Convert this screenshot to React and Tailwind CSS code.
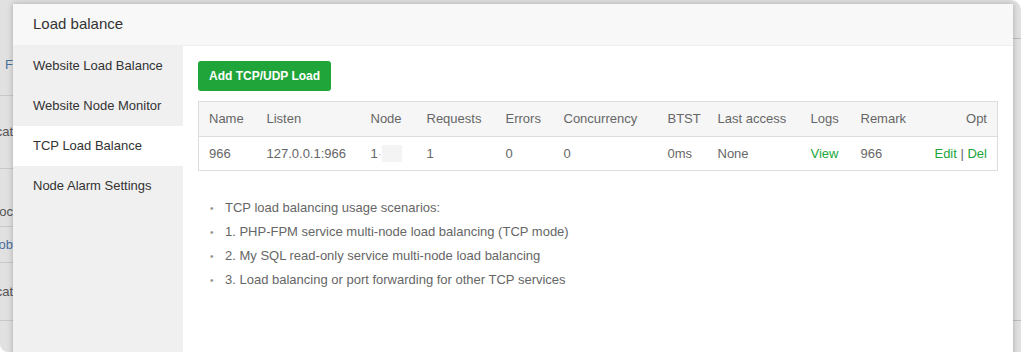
import React from 'react';

const navItems = [
  'Website Load Balance',
  'Website Node Monitor',
  'TCP Load Balance',
  'Node Alarm Settings',
];

const cols = [
  { title: 'Name', w: 'w-[58px]' },
  { title: 'Listen', w: 'w-[104px]' },
  { title: 'Node', w: 'w-[56px]' },
  { title: 'Requests', w: 'w-[79px]' },
  { title: 'Errors', w: 'w-[58px]' },
  { title: 'Concurrency', w: 'w-[104px]' },
  { title: 'BTST', w: 'w-[50px]' },
  { title: 'Last access', w: 'w-[93px]' },
  { title: 'Logs', w: 'w-[50px]' },
  { title: 'Remark', w: 'w-[70px]' },
  { title: 'Opt', w: '' },
];

const tips = [
  'TCP load balancing usage scenarios:',
  '1. PHP-FPM service multi-node load balancing (TCP mode)',
  '2. My SQL read-only service multi-node load balancing',
  '3. Load balancing or port forwarding for other TCP services',
];

function App() {
  return (
    <div className="w-[1021px] h-[352px] bg-white overflow-hidden font-['Liberation_Sans',Arial,sans-serif]">
      <div className="relative w-full h-full bg-[#e1e1e1] rounded-tr-[10px] rounded-bl-[8px] overflow-hidden">
        {/* page behind the layer */}
        <div className="w-[13px] h-full flex flex-col text-[13px] text-[#555]">
          <div className="h-[96px] border-b border-[#c9c9c9] flex items-center justify-end pt-[34px] whitespace-nowrap text-[#4a6f9c]">F</div>
          <div className="h-[73px] border-b border-[#c9c9c9] flex items-center justify-end whitespace-nowrap">cat</div>
          <div className="h-[58px] border-b border-[#c9c9c9] flex items-center justify-end whitespace-nowrap pt-[28px]">roc</div>
          <div className="h-[36px] border-b border-[#c9c9c9] flex items-center justify-end whitespace-nowrap text-[#4a6f9c]">lob</div>
          <div className="h-[58px] border-b border-[#c9c9c9] flex items-center justify-end whitespace-nowrap">cat</div>
        </div>
        <div className="absolute right-0 top-[38px] w-[8px] border-b border-[#bdbdbd]" />
        <div className="absolute right-0 top-[320px] w-[8px] border-b border-[#bdbdbd]" />

        {/* layer */}
        <div className="absolute left-[13px] top-[4px] w-[1000px] h-[360px] bg-white flex flex-col shadow-[0_0_6px_rgba(0,0,0,0.25)]">
          <div className="h-[42px] shrink-0 bg-[#f8f8f8] border-b border-[#eeeeee] flex items-center pl-[20px] text-[15px] text-[#333]">
            Load balance
          </div>
          <div className="flex flex-1">
            <div className="w-[170px] bg-[#f0f0f0] flex flex-col">
              {navItems.map((item, i) => (
                <div
                  key={item}
                  className={`h-[40px] flex items-center pl-[20px] text-[13px] text-[#333] ${i === 2 ? 'bg-white' : ''}`}
                >
                  {item}
                </div>
              ))}
            </div>
            <div className="flex-1 pl-[15px] pr-[15px] pt-[15px]">
              <button className="h-[30px] px-[11px] bg-[#20a53a] text-white text-[12px] font-bold rounded-[3px]">
                Add TCP/UDP Load
              </button>
              <table className="mt-[10px] w-[800px] border border-[#dddddd] border-collapse text-[13px] text-[#666] table-fixed">
                <thead>
                  <tr className="bg-[#f6f6f6] h-[35px] border-b border-[#dddddd]">
                    {cols.map((c, i) => (
                      <th
                        key={c.title}
                        className={`${c.w} font-normal pl-[10px] ${i === cols.length - 1 ? 'text-right pr-[10px]' : 'text-left'}`}
                      >
                        {c.title}
                      </th>
                    ))}
                  </tr>
                </thead>
                <tbody>
                  <tr className="h-[34px] [&>td]:pl-[10px]">
                    <td>966</td>
                    <td>127.0.0.1:966</td>
                    <td>
                      <span className="inline-flex items-center">
                        1<span className="text-[#ccc]">·</span>
                        <span className="inline-block w-[20px] h-[17px] bg-[#f4f4f4]" />
                      </span>
                    </td>
                    <td>1</td>
                    <td>0</td>
                    <td>0</td>
                    <td>0ms</td>
                    <td>None</td>
                    <td className="text-[#20a53a]">View</td>
                    <td>966</td>
                    <td className="text-right pr-[10px]">
                      <span className="text-[#20a53a]">Edit</span>
                      <span className="text-[#666]"> | </span>
                      <span className="text-[#20a53a]">Del</span>
                    </td>
                  </tr>
                </tbody>
              </table>
              <ul className="mt-[25px] pl-[12px] flex flex-col text-[13px] text-[#666]">
                {tips.map((t) => (
                  <li key={t} className="h-[24px] flex items-center">
                    <span className="w-[15px] text-[#999] text-[10px]">•</span>
                    {t}
                  </li>
                ))}
              </ul>
            </div>
          </div>
        </div>
      </div>
    </div>
  );
}

export default App;
